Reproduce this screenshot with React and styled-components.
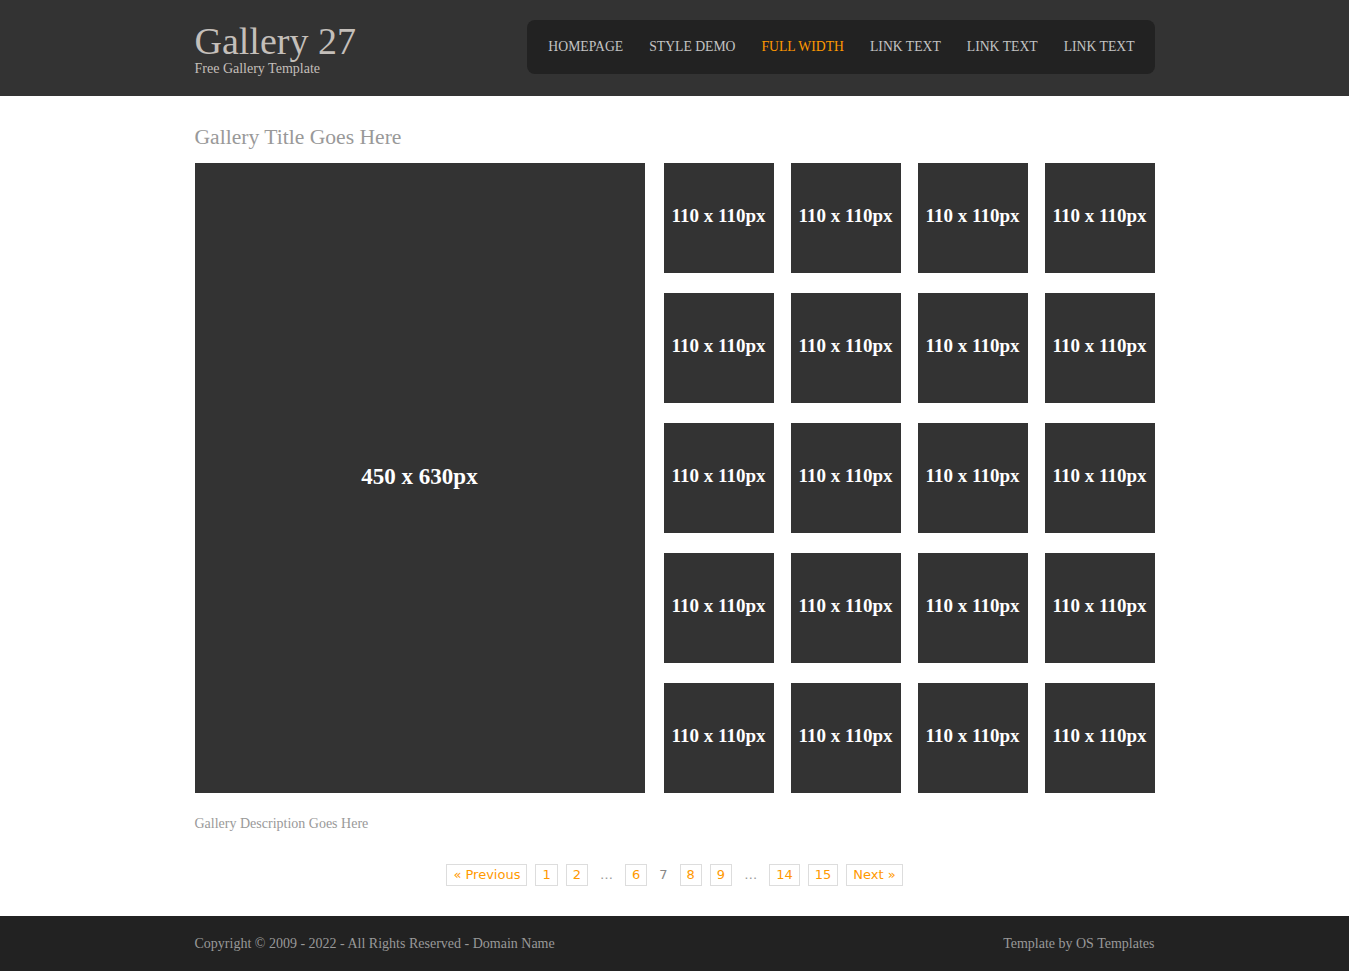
import React from 'react'
import styled, { createGlobalStyle } from 'styled-components';

const GlobalStyle = createGlobalStyle`
  html, body {
    margin: 0;
    padding: 0;
    background: #fff;
    font-family: Georgia, 'Liberation Serif', serif;
  }
`;

const navLinks = ['Homepage', 'Style Demo', 'Full Width', 'Link Text', 'Link Text', 'Link Text'];
const pages = ['1', '2', '...', '6', '7', '8', '9', '...', '14', '15'];

const App = () => {
  return (
    <>
      <GlobalStyle />
      <Header>
        <Inner>
          <Logo>
            <LogoTitle>Gallery 27</LogoTitle>
            <Tagline>Free Gallery Template</Tagline>
          </Logo>
          <Nav>
            {navLinks.map((l, i) => (
              <NavLink key={i} $active={i === 2}>{l}</NavLink>
            ))}
          </Nav>
        </Inner>
      </Header>

      <Container>
        <Title>Gallery Title Goes Here</Title>
        <Gallery>
          <BigImage>450 x 630px</BigImage>
          <Thumbs>
            {Array.from({ length: 20 }).map((_, i) => (
              <Thumb key={i}>110 x 110px</Thumb>
            ))}
          </Thumbs>
        </Gallery>
        <Description>Gallery Description Goes Here</Description>
        <Pagination>
          <PageLink>« Previous</PageLink>
          {pages.map((p, i) =>
            p === '...' ? <Dots key={i}>…</Dots>
              : p === '7' ? <Current key={i}>{p}</Current>
              : <PageLink key={i}>{p}</PageLink>
          )}
          <PageLink>Next »</PageLink>
        </Pagination>
      </Container>

      <Footer>
        <FooterInner>
          <span>Copyright © 2009 - 2022 - All Rights Reserved - Domain Name</span>
          <span>Template by OS Templates</span>
        </FooterInner>
      </Footer>
    </>
  )
}

const Header = styled.header`
  background: #333;
  height: 96px;
`;
const Inner = styled.div`
  width: 960px;
  margin: 0 auto;
  display: flex;
  justify-content: space-between;
  align-items: flex-start;
`;
const Logo = styled.div`
  padding-top: 20px;
  color: #c4bfba;
`;
const LogoTitle = styled.h1`
  margin: 0;
  font-weight: normal;
  font-size: 38px;
  line-height: 42px;
  font-family: 'Liberation Serif', serif;
`;
const Tagline = styled.p`
  margin: 0;
  font-size: 14px;
  line-height: 14px;
  font-family: 'Liberation Serif', serif;
`;
const Nav = styled.nav`
  margin-top: 20px;
  height: 54px;
  background: #222;
  border-radius: 8px;
  display: flex;
  align-items: center;
  gap: 26px;
  padding: 0 20px 0 21px;
`;
const NavLink = styled.a`
  font-family: 'Liberation Serif', serif;
  font-size: 13.7px;
  text-transform: uppercase;
  color: ${p => (p.$active ? '#ff9900' : '#c4c4c4')};
  cursor: pointer;
`;
const Container = styled.main`
  width: 960px;
  margin: 0 auto;
  padding-top: 26px;
`;
const Title = styled.h2`
  margin: 0 0 11px;
  font-weight: normal;
  font-size: 21.6px;
  line-height: 30px;
  color: #999;
  font-family: 'Liberation Serif', serif;
`;
const Gallery = styled.div`
  display: flex;
  justify-content: space-between;
`;
const Box = styled.div`
  background: #333;
  color: #fff;
  display: flex;
  align-items: center;
  justify-content: center;
  font-family: 'Liberation Serif', serif;
  font-weight: bold;
  box-sizing: border-box;
`;
const BigImage = styled(Box)`
  width: 450px;
  height: 630px;
  font-size: 23px;
  padding-bottom: 2px;
`;
const Thumbs = styled.div`
  display: grid;
  grid-template-columns: repeat(4, 110px);
  grid-auto-rows: 110px;
  column-gap: 17px;
  row-gap: 20px;
`;
const Thumb = styled(Box)`
  font-size: 19px;
  padding-bottom: 4px;
`;
const Description = styled.p`
  margin: 23px 0 0;
  font-size: 14px;
  color: #999;
  font-family: 'Liberation Serif', serif;
`;
const Pagination = styled.div`
  margin: 32px 0 30px;
  display: flex;
  justify-content: center;
  align-items: center;
  gap: 8px;
  font-family: Verdana, 'DejaVu Sans', sans-serif;
  font-size: 13px;
`;
const PageLink = styled.a`
  border: 1px solid #ddd;
  color: #ff9900;
  padding: 2px 6px;
  line-height: 16px;
  cursor: pointer;
`;
const Current = styled.span`
  color: #888;
  padding: 2px 4px;
  line-height: 16px;
`;
const Dots = styled.span`
  color: #999;
  padding: 2px 4px;
  line-height: 16px;
`;
const Footer = styled.footer`
  background: #222;
  height: 55px;
`;
const FooterInner = styled.div`
  width: 960px;
  margin: 0 auto;
  height: 55px;
  display: flex;
  justify-content: space-between;
  align-items: center;
  color: #999;
  font-size: 14px;
  font-family: 'Liberation Serif', serif;
`;

export default App
